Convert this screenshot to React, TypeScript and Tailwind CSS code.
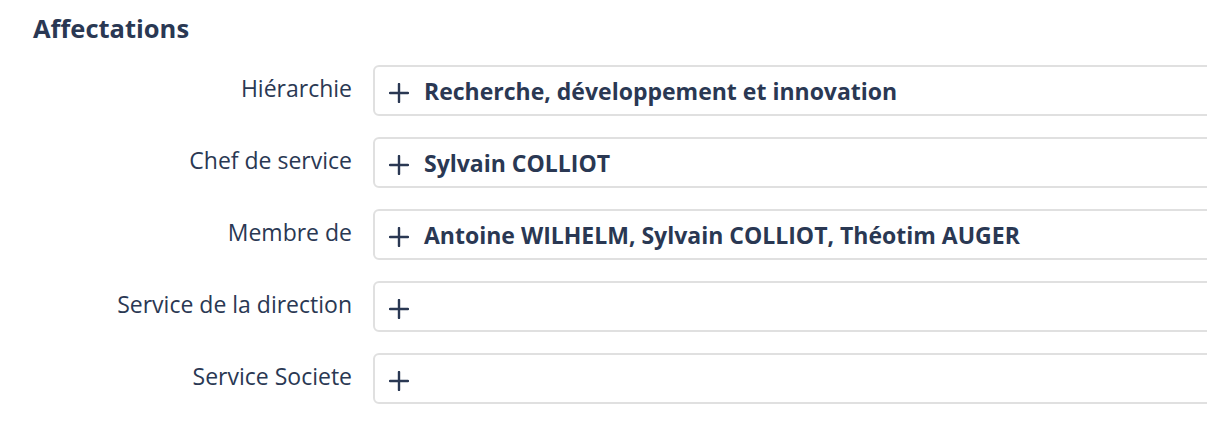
const rows = [
  { label: "Hiérarchie", value: "Recherche, développement et innovation" },
  { label: "Chef de service", value: "Sylvain COLLIOT" },
  { label: "Membre de", value: "Antoine WILHELM, Sylvain COLLIOT, Théotim AUGER" },
  { label: "Service de la direction", value: "" },
  { label: "Service Societe", value: "" },
];

function PlusIcon() {
  return (
    <svg width="20" height="20" viewBox="0 0 20 20" className="shrink-0 mt-[4px]">
      <path d="M10 1v18M1 10h18" stroke="currentColor" strokeWidth="2.4" strokeLinecap="round" />
    </svg>
  );
}

export default function App() {
  return (
    <div
      className="w-[1207px] h-[423px] overflow-hidden bg-white text-[#2a3853]"
      style={{ fontFamily: "'Open Sans', 'Noto Sans', sans-serif" }}
    >
      <div className="w-[1260px] pl-[33px] pt-[12px]">
        <h2 className="text-[25.5px] font-bold leading-[32px]">Affectations</h2>
        <div className="mt-[21px] flex flex-col gap-[21px]">
          {rows.map((r, i) => (
            <div key={i} className="flex flex-row items-start">
              <div className="w-[319px] shrink-0 text-right text-[23px] leading-[28px] pt-[9px] whitespace-nowrap">
                {r.label}
              </div>
              <div className="ml-[21px] flex-1 h-[51px] border-2 border-[#e0e0e0] rounded-[6px] flex flex-row items-center pl-[14px]">
                <PlusIcon />
                {r.value && (
                  <span className="ml-[15px] mt-[1px] text-[23px] font-bold leading-none whitespace-nowrap">
                    {r.value}
                  </span>
                )}
              </div>
            </div>
          ))}
        </div>
      </div>
    </div>
  );
}
